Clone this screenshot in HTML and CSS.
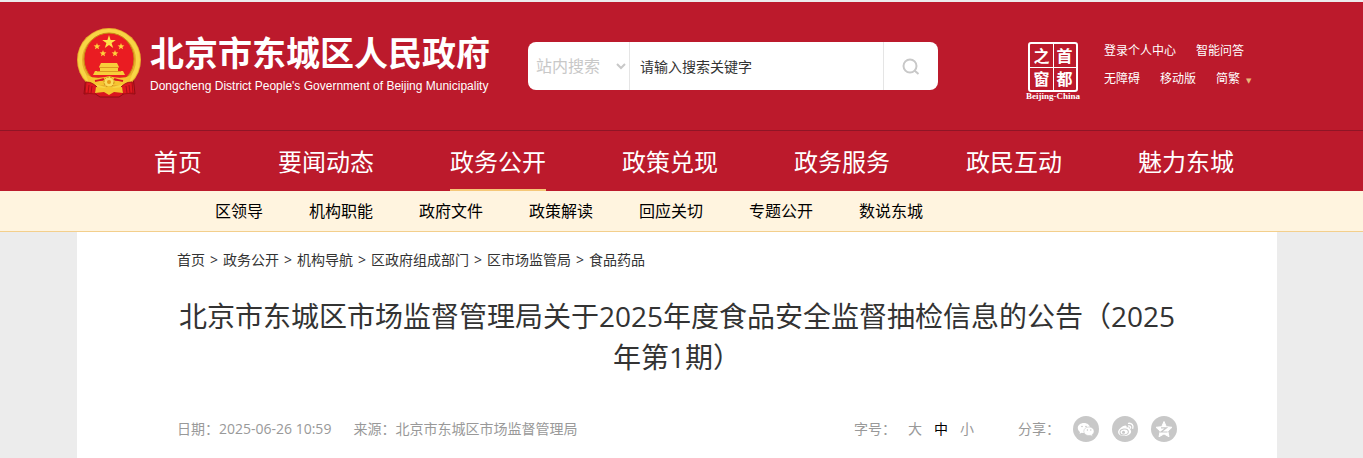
FILE: index.html
```html
<!DOCTYPE html>
<html lang="zh-CN">
<head>
  <meta charset="UTF-8">
  <meta name="viewport" content="width=device-width, initial-scale=1.0">
  <title>北京市东城区人民政府</title>
  <link rel="stylesheet" href="styles.css">
</head>
<body>
  <header class="header">
    <div class="wrap top">
      <a class="logo" href="#">
        <svg class="emblem" width="65" height="72" viewBox="0 0 65 72" aria-hidden="true">
          <path d="M9 50L7 68l10-1 6 4h19l6-4 10 1-2-18z" fill="#d9161f" stroke="#8f0d14"/>
          <ellipse cx="32" cy="34" rx="32" ry="32" fill="#e9ae2c"/>
          <ellipse cx="32" cy="34" rx="29" ry="29" fill="none" stroke="#f8d545" stroke-width="4"/>
          <ellipse cx="32" cy="33" rx="25" ry="26" fill="#ea1c22" stroke="#c98a14"/>
          <path d="M32 9l1.600 4.900h5.200l-4.200 3 1.600 5-4.200-3-4.200 3 1.600-5-4.200-3h5.200z" fill="#ffe14a"/>
          <path id="star" d="M20 17l.9 2.300 2.500.1-2 1.500.7 2.400-2.100-1.300-2.100 1.300.7-2.400-2-1.500 2.500-.1z" fill="#ffd23c"/>
          <use href="#star" x="24"/>
          <use href="#star" x="6" y="7"/>
          <use href="#star" x="18" y="7"/>
          <path d="M24 37h16l2 4-1 1v3h5l2 4H16l2-4h5v-3l-1-1z" fill="#f8ce3a"/>
          <path d="M23 41.500h18M20 45.500h24" stroke="#dc9a20"/>
          <path d="M12 51h40l-5 6H17z" fill="#d81820"/>
          <path d="M9 49c9 4 16 3 23 1 7 2 14 3 23-1l-3 8c-6 3-12 2-20 2s-14 1-20-2z" fill="#f6c430"/>
          <path d="M18 55c4-1 7-1 9-2M46 55c-4-1-7-1-9-2" stroke="#d81820" stroke-width="2" fill="none"/>
          <circle cx="32" cy="56" r="5" fill="#fbdc5c" stroke="#c98a14" stroke-dasharray="2 1"/>
          <circle cx="32" cy="56" r="2" fill="#e59a16"/>
          <path d="M9 56c5 0 8 2 11 5l-2 7-10-1zM55 56c-5 0-8 2-11 5l2 7 10-1z" fill="#df1820" stroke="#a80e16"/>
          <path d="M12 59l-1 8M15 60l-1 7M52 59l1 8M49 60l1 7" stroke="#a80e16"/>
          <path d="M19 61l8 1 5-2 5 2 8-1 1 6-9-1-5 3-5-3-9 1z" fill="#f6c430"/>
        </svg>
        <span class="logo-text">
          <strong>北京市东城区人民政府</strong>
          <span class="logo-en">Dongcheng District People's Government of Beijing Municipality</span>
        </span>
      </a>
      <form class="search">
        <select aria-label="搜索范围">
          <option>站内搜索</option>
        </select>
        <input type="text" aria-label="搜索关键字" placeholder="请输入搜索关键字">
        <button type="button" aria-label="搜索">
          <svg width="18" height="18" viewBox="0 0 18 18" fill="none" stroke="#c8c8c8" stroke-width="2">
            <circle cx="8" cy="8" r="6.500"/>
            <path d="M12.500 12.500L16.500 16"/>
          </svg>
        </button>
      </form>
      <a class="capital" href="#">
        <span class="seal"><i>之</i><i>首</i><i>窗</i><i>都</i></span>
        <span class="seal-en">Beijing-China</span>
      </a>
      <div class="tools">
        <p><a href="#">登录个人中心</a><a href="#">智能问答</a></p>
        <p><a href="#">无障碍</a><a href="#">移动版</a><a class="lang" href="#">简繁</a></p>
      </div>
    </div>
    <nav class="nav">
      <div class="wrap nav-list">
        <a href="#">首页</a>
        <a href="#">要闻动态</a>
        <a class="on" href="#">政务公开</a>
        <a href="#">政策兑现</a>
        <a href="#">政务服务</a>
        <a href="#">政民互动</a>
        <a href="#">魅力东城</a>
      </div>
    </nav>
  </header>
  <nav class="subnav">
    <div class="wrap subnav-list">
      <a href="#">区领导</a>
      <a href="#">机构职能</a>
      <a href="#">政府文件</a>
      <a href="#">政策解读</a>
      <a href="#">回应关切</a>
      <a href="#">专题公开</a>
      <a href="#">数说东城</a>
    </div>
  </nav>
  <div class="page">
    <main class="wrap article">
      <div class="crumbs">
        <a href="#">首页</a><span>&gt;</span><a href="#">政务公开</a><span>&gt;</span><a href="#">机构导航</a><span>&gt;</span><a href="#">区政府组成部门</a><span>&gt;</span><a href="#">区市场监管局</a><span>&gt;</span><a href="#">食品药品</a>
      </div>
      <h1>北京市东城区市场监督管理局关于2025年度食品安全监督抽检信息的公告（2025年第1期）</h1>
      <div class="meta">
        <span>日期：2025-06-26 10:59</span>
        <span>来源：北京市东城区市场监督管理局</span>
        <div class="size">
          <span>字号：</span>
          <button type="button">大</button>
          <button type="button" class="on">中</button>
          <button type="button">小</button>
        </div>
        <div class="share">
          <span>分享：</span>
          <a href="#" aria-label="微信">
            <svg width="26" height="26" viewBox="0 0 26 26">
              <circle cx="13" cy="13" r="13" fill="#c8c8c8"/>
              <path d="M11 7c-3.600 0-6.200 2.200-6.200 5 0 1.600.9 3 2.200 3.900l-.5 1.900 2.200-1.100c.8.200 1.500.3 2.300.3C14.600 17 17 14.700 17 12s-2.500-5-6-5z" fill="#fff"/>
              <path d="M16 11c-3 0-5.200 1.900-5.200 4.300S13 19.600 16 19.600c.6 0 1.200-.1 1.700-.2l1.900 1-.5-1.700c1.200-.8 2-2 2-3.400 0-2.400-2.200-4.300-5.100-4.300z" fill="#fff" stroke="#c8c8c8" stroke-width=".6"/>
              <g fill="#c8c8c8"><circle cx="9" cy="10.500" r=".8"/><circle cx="13" cy="10.500" r=".8"/><circle cx="14.400" cy="14" r=".7"/><circle cx="17.800" cy="14" r=".7"/></g>
            </svg>
          </a>
          <a href="#" aria-label="微博">
            <svg width="26" height="26" viewBox="0 0 26 26">
              <circle cx="13" cy="13" r="13" fill="#c8c8c8"/>
              <path d="M17.500 12.800c.6-1.300-.3-2.200-2.900-1.300.5-1.700-.8-2.600-3.200-1.400-2.700 1.300-5.300 3.900-5.300 6.100 0 2.300 2.900 3.800 6 3.800 4 0 7-2.200 7-4.300 0-1.400-.8-2.300-1.600-2.900z" fill="#fff"/>
              <ellipse cx="12.200" cy="16" rx="4.200" ry="3" fill="none" stroke="#c8c8c8" transform="rotate(-8 12.200 16)"/>
              <circle cx="11.500" cy="16.300" r="1.500" fill="#c8c8c8"/>
              <path d="M16.500 10c1.500-.2 2.400.8 2 2.200M16.500 7.300c3.200-.4 5.200 2 4.300 5" fill="none" stroke="#fff" stroke-width="1.300" stroke-linecap="round"/>
            </svg>
          </a>
          <a href="#" aria-label="QQ空间">
            <svg width="26" height="26" viewBox="0 0 26 26">
              <circle cx="13" cy="13" r="13" fill="#c8c8c8"/>
              <path d="M13 5.500l2.300 5.200 5.700.6-4.200 3.900 1.200 5.600-5-2.900-5 2.900 1.200-5.600L5 11.300l5.700-.6z" fill="#fff" stroke="#fff" stroke-linejoin="round"/>
              <path d="M10 11.800h5.500l-5.500 4.200h6.500" fill="none" stroke="#c8c8c8" stroke-width="1.200"/>
            </svg>
          </a>
        </div>
      </div>
    </main>
  </div>
</body>
</html>
```

FILE: styles.css
```css
* {
  box-sizing: border-box;
}
body {
  margin: 0;
  background: #ececec;
  color: #333;
  font-family: "Open Sans", "Noto Sans CJK SC", sans-serif;
  font-size: 14px;
}
a {
  color: inherit;
  text-decoration: none;
}
p {
  margin: 0;
}
.wrap {
  width: 100%;
  max-width: 1200px;
  margin: 0 auto;
}
.top, .nav, .subnav, .page {
  padding-right: 9px;
}
.header {
  background: #bc1a2c;
  color: #fff;
  border-top: 2px solid #ececec;
}

/* logo, search and tools */
.top {
  display: flex;
  align-items: flex-start;
  max-width: 1209px;
  height: 128px;
  padding-top: 24px;
}
.logo {
  display: flex;
  gap: 8px;
}
.emblem {
  display: block;
}
.logo-text {
  display: flex;
  flex-direction: column;
  padding-top: 6px;
}
.logo-text strong {
  font-size: 34px;
  line-height: 42px;
}
.logo-en {
  font-family: "Liberation Sans Narrow", "Liberation Sans", Arial, sans-serif;
  font-size: 12px;
  line-height: 24px;
}
.search {
  display: flex;
  width: 410px;
  height: 48px;
  margin: 16px 0 0 38px;
  background: #fff;
  border-radius: 8px;
  overflow: hidden;
}
.search select,
.search input,
.search button {
  border: none;
  background: none;
  font-family: inherit;
  outline: none;
}
.search select {
  width: 102px;
  padding-left: 4px;
  border-right: 1px solid #e5e5e5;
  color: #c8c8c8;
  font-size: 16px;
}
.search input {
  flex: 1;
  min-width: 0;
  padding: 0 10px;
  font-size: 14px;
}
.search input::placeholder {
  color: #333;
}
.search button {
  width: 55px;
  padding: 0;
  border-left: 1px solid #e5e5e5;
}
.search svg {
  vertical-align: middle;
}
.capital {
  width: 56px;
  margin: 16px 0 0 87px;
  text-align: center;
}
.seal {
  display: grid;
  grid-template-columns: 1fr 1fr;
  width: 50px;
  margin: 0 auto;
  border: 2px solid #fff;
  border-radius: 3px;
  background: linear-gradient(#fff, #fff) center / 1px 100% no-repeat, linear-gradient(#fff, #fff) center / 100% 1px no-repeat;
}
.seal i {
  font-family: "Noto Sans CJK SC", sans-serif;
  font-size: 16px;
  font-style: normal;
  font-weight: bold;
  line-height: 23px;
}
.seal-en {
  display: block;
  font-family: "Liberation Serif", serif;
  font-size: 9px;
  font-weight: bold;
  line-height: 8px;
}
.tools {
  margin: 11px 0 0 23px;
  font-size: 12px;
  line-height: 28px;
}
.tools p {
  display: flex;
  gap: 20px;
}
.lang::after {
  content: "▼";
  margin-left: 6px;
  color: #e8b878;
  font-family: "DejaVu Sans", sans-serif;
  font-size: 7px;
}

/* menus */
.nav {
  border-top: 1px solid #8f1526;
}
.nav-list {
  display: flex;
  gap: 76px;
  padding-left: 77px;
  font-size: 24px;
  line-height: 55px;
}
.nav-list a {
  border-bottom: 2px solid transparent;
  padding-top: 3px;
  white-space: nowrap;
}
.nav-list .on {
  border-color: #f5c878;
}
.subnav {
  background: #fff4df;
  border-bottom: 1px solid #f3cf8c;
  color: #000;
}
.subnav-list {
  display: flex;
  gap: 46px;
  padding-left: 138px;
  font-size: 16px;
  line-height: 40px;
}

/* article */
.article {
  background: #fff;
  padding: 16px 100px;
}
.crumbs {
  line-height: 24px;
}
.crumbs span {
  margin: 0 5px;
}
h1 {
  margin: 24px 0 38px;
  font-size: 28px;
  font-weight: normal;
  line-height: 41px;
  text-align: center;
}
.meta {
  display: flex;
  align-items: center;
  gap: 22px;
  color: #999;
  line-height: 26px;
}
.size {
  display: flex;
  margin-left: auto;
}
.size button {
  width: 14px;
  margin-left: 12px;
  padding: 0;
  border: none;
  background: none;
  color: inherit;
  font: inherit;
}
.size .on {
  color: #000;
}
.share {
  display: flex;
  gap: 13px;
  margin-left: 22px;
}
.share svg {
  display: block;
}
```
